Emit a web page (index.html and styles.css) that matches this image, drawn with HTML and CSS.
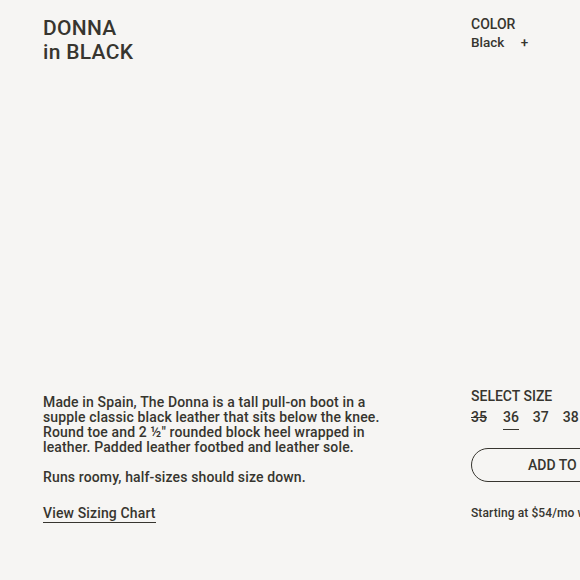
FILE: index.html
```html
<!DOCTYPE html>
<html>
<head>
<meta charset="utf-8">
<link rel="stylesheet" href="styles.css">
</head>
<body>
<div class="page">
  <div class="left">
    <h1 class="title">DONNA<br>in BLACK</h1>
    <div class="details">
      <p class="desc">Made in Spain, The Donna is a tall pull-on boot in a supple classic black leather that sits below the knee. Round toe and 2 ½" rounded block heel wrapped in leather. Padded leather footbed and leather sole.</p>
      <p class="desc">Runs roomy, half-sizes should size down.</p>
      <a class="chart">View Sizing Chart</a>
    </div>
  </div>
  <div class="right">
    <div class="color">
      <div class="label">COLOR</div>
      <div class="swatch">Black <span class="plus">+</span></div>
    </div>
    <div class="buy">
      <div class="label size-label">SELECT SIZE</div>
      <div class="sizes">
        <span class="size out">35</span>
        <span class="size active">36</span>
        <span class="size">37</span>
        <span class="size">38</span>
      </div>
      <button class="add">ADD TO BAG</button>
      <div class="finance">Starting at $54/mo with Affirm</div>
    </div>
  </div>
</div>
</body>
</html>
```
FILE: styles.css
```css
html, body { margin: 0; padding: 0; background: #f6f5f3; overflow: hidden; }
body { font-family: Roboto, "Liberation Sans", Arial, sans-serif; color: #37352f; }
.page { display: flex; height: 580px; width: 580px; overflow: hidden; }
.left { width: 471px; flex: none; padding-left: 43px; box-sizing: border-box; display: flex; flex-direction: column; justify-content: space-between; padding-top: 16px; padding-bottom: 57px; }
.title { margin: 0; font-size: 21px; line-height: 24px; font-weight: 500; letter-spacing: 0.3px; }
.details { padding-top: 1px; }
.desc { margin: 0 0 15px; font-size: 14px; line-height: 15px; font-weight: 500; width: 350px; letter-spacing: 0.14px; }
.chart { display: inline-block; font-size: 14px; font-weight: 500; line-height: 16px; border-bottom: 1.5px solid #37352f; padding-bottom: 1px; margin-top: 5px; letter-spacing: 0.14px; }
.right { flex: none; width: 300px; display: flex; flex-direction: column; justify-content: space-between; padding-top: 16px; padding-bottom: 60px; }
.label { font-size: 14px; font-weight: 500; line-height: 16px; }
.size-label { padding-top: 2px; }
.swatch { font-size: 13.5px; font-weight: 500; margin-top: 2px; line-height: 16px; }
.plus { margin-left: 13px; }
.sizes { display: flex; gap: 14px; margin-top: 5px; font-size: 14px; font-weight: 500; }
.size { padding-bottom: 4px; border-bottom: 1.5px solid transparent; }
.size.out { text-decoration: line-through; margin-left: -2px; padding: 0 2px 4px; }
.size.active { border-bottom-color: #37352f; }
.add { display: block; margin-top: 18px; width: 220px; height: 34px; border: 1px solid #37352f; border-radius: 17px; background: transparent; font-family: inherit; font-weight: 500; font-size: 14px; color: #37352f; text-align: left; padding-left: 56px; }
.finance { margin-top: 24px; font-size: 12px; font-weight: 500; white-space: nowrap; letter-spacing: 0.1px; }
```
